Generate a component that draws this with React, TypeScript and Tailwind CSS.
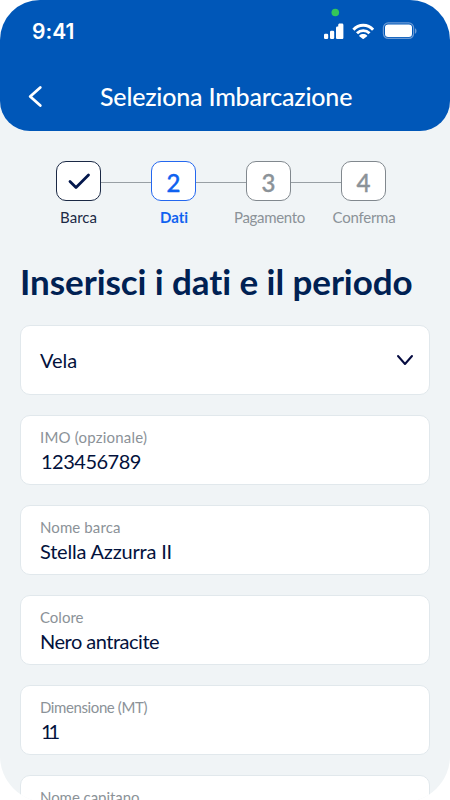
import React from "react";

const steps = [
  { n: "1", label: "Barca", box: "border-[#1b2945] text-[#03174c]", text: "text-[#1b2945]" },
  { n: "2", label: "Dati", box: "border-[#2467ef] text-[#0f62f0]", text: "text-[#0f62f0] font-bold pl-px" },
  { n: "3", label: "Pagamento", box: "border-[#81888e] text-[#8b9298]", text: "text-[#8b9298] tracking-[-0.3px] pl-0.5" },
  { n: "4", label: "Conferma", box: "border-[#81888e] text-[#8b9298]", text: "text-[#8b9298] tracking-[-0.25px] pl-px" },
];

const fields = [
  { label: "IMO (opzionale)", value: "123456789", l: "tracking-[0.2px]", v: "tracking-[-0.5px] pl-px" },
  { label: "Nome barca", value: "Stella Azzurra II", l: "tracking-[0.1px]", v: "tracking-[-0.2px]" },
  { label: "Colore", value: "Nero antracite", l: "tracking-[0px]", v: "tracking-[-0.5px]" },
  { label: "Dimensione (MT)", value: "11", l: "tracking-[-0.4px]", v: "tracking-[-4px] pl-px" },
  { label: "Nome capitano", value: "", l: "tracking-[-0.05px]", v: "" },
];

function StatusIcons() {
  return (
    <svg className="absolute left-[320px] top-0" width="104" height="50" viewBox="320 0 104 50" fill="none">
      <circle cx="335.3" cy="12.5" r="3.8" fill="#34c759" />
      <g fill="#fff">
        <rect x="324" y="33.8" width="4.2" height="5.2" rx="1.2" />
        <rect x="330" y="30.8" width="4.2" height="8.2" rx="1.2" />
        <path d="M336 28.200c0-1 .5-1.600 1.400-1.600V37.500v-11h.8v-1.400c0-1 .6-1.600 1.500-1.600h2.200c1 0 1.500.6 1.500 1.600v12.300c0 1-.5 1.600-1.500 1.600H337.500c-1 0-1.500-.6-1.500-1.600z" />
        <path d="M359.300 35.500c2.300-1.900 5.500-1.900 7.800 0 .3.200.3.600 0 .8l-3.300 2.500c-.4.300-.8.300-1.200 0l-3.300-2.500c-.3-.2-.3-.6 0-.8z" />
      </g>
      <path d="M353.400 29.800c5.300-6.100 14.400-6.100 19.700 0M357 33.300c3.500-3.600 9-3.600 12.500 0" stroke="#fff" strokeWidth="2.900" />
      <rect x="383.400" y="22.900" width="30.200" height="15.500" rx="4.800" stroke="#6b9bd5" strokeWidth="1.200" />
      <rect x="385" y="24.400" width="27" height="12.500" rx="3.200" fill="#fff" />
      <path d="M415 28.300c2 .8 2 4.700 0 5.500z" fill="#6b9bd5" />
    </svg>
  );
}

export default function App() {
  return (
    <div className="h-[800px] w-[450px] overflow-hidden bg-white font-['Lato','Liberation_Sans',sans-serif] [font-variant-ligatures:none]">
      <main className="h-[802px] overflow-hidden rounded-t-[40px] rounded-b-[46px] bg-[#f0f4f6]">
        <header className="relative h-[131px] rounded-b-[30px] bg-[#0057b8] text-white">
          <div className="pl-8 pt-[18px] font-['Inter',sans-serif] text-[21px] font-semibold leading-[27px] tracking-[0px]">9:41</div>
          <StatusIcons />
          <div className="flex h-[50px] items-center pl-7 pt-[51px]">
            <svg width="16" height="24" viewBox="0 0 16 24" fill="none" stroke="white" strokeWidth="2.800" strokeLinecap="round" strokeLinejoin="round">
              <path d="M12.300 3.500 2.200 12.500l10.100 9" />
            </svg>
            <h1 className="ml-14 whitespace-nowrap text-[25px] font-medium leading-8 tracking-[-0.2px]">Seleziona Imbarcazione</h1>
          </div>
        </header>

        <nav className="flex justify-center pl-[1px] pr-[9px] pt-[30px]">
          {steps.map((step, i) => (
            <React.Fragment key={step.n}>
              {i > 0 && <div className="mt-[21px] h-px w-[50px] shrink-0 bg-[#989fa4]" />}
              <div className="flex w-[45px] shrink-0 flex-col items-center">
                <div className={`flex h-10 w-[45px] items-center justify-center rounded-[10px] border bg-white pt-[3px] text-[24px] font-medium [-webkit-text-stroke:0.4px_currentColor] ${step.box}`}>
                  {i === 0 ? (
                    <svg className="-mt-[3px]" width="24" height="20" viewBox="0 0 24 20" fill="none" stroke="currentColor" strokeWidth="2.800" strokeLinecap="round" strokeLinejoin="round">
                      <path d="m3 10.500 6 6L21.500 4" />
                    </svg>
                  ) : (
                    step.n
                  )}
                </div>
                <span className={`mt-1.5 whitespace-nowrap text-[15px] leading-5 ${step.text}`}>{step.label}</span>
              </div>
            </React.Fragment>
          ))}
        </nav>

        <h2 className="ml-5 mt-[33px] whitespace-nowrap text-[35px] font-bold leading-[42px] tracking-[-0.07px] text-[#002153]">
          Inserisci i dati e il periodo
        </h2>

        <form className="mt-[23px] flex flex-col gap-5 px-5 text-[#03123c]">
          <div className="flex h-[70px] items-center justify-between rounded-[10px] border border-[#e1e8ec] bg-white pl-[19px] pr-[15px] text-xl">
            <span>Vela</span>
            <svg width="18" height="14" viewBox="0 0 18 14" fill="none" stroke="#050b40" strokeWidth="2" strokeLinecap="round" strokeLinejoin="round">
              <path d="m2 3 7 8 7-8" />
            </svg>
          </div>
          {fields.map((f) => (
            <div key={f.label} className="h-[70px] shrink-0 rounded-[10px] border border-[#e1e8ec] bg-white pl-[19px] pt-[11px]">
              <div className={`text-[15px] leading-5 text-[#8b9298] ${f.l}`}>{f.label}</div>
              <div className={`mt-[2px] text-xl leading-6 ${f.v}`}>{f.value}</div>
            </div>
          ))}
        </form>
      </main>
    </div>
  );
}
